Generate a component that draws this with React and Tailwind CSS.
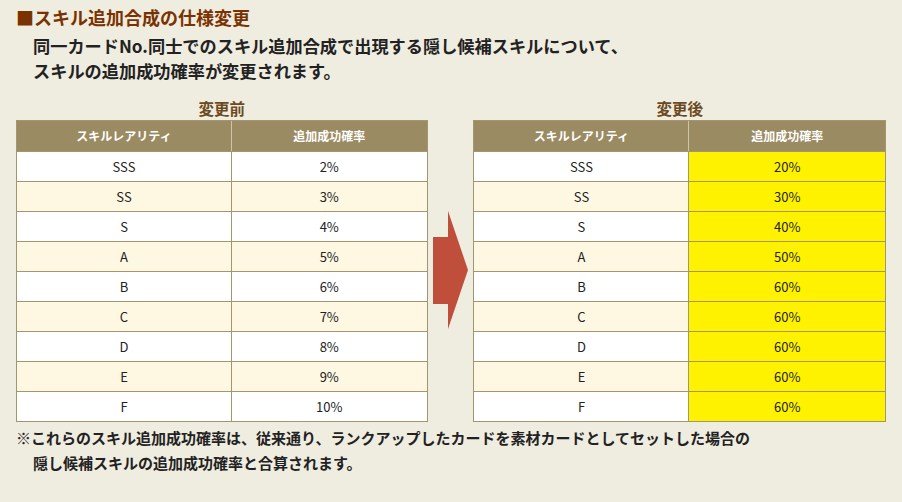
const rows = [
  ["SSS", "2%", "20%"],
  ["SS", "3%", "30%"],
  ["S", "4%", "40%"],
  ["A", "5%", "50%"],
  ["B", "6%", "60%"],
  ["C", "7%", "60%"],
  ["D", "8%", "60%"],
  ["E", "9%", "60%"],
  ["F", "10%", "60%"],
];

function RateTable({ title, index, leftW, highlight }) {
  return (
    <div className="flex flex-col">
      <div className="h-[22px] text-center text-[15.5px] leading-[20px] font-bold text-[#6b4a1e]">
        {title}
      </div>
      <div className="border border-[#a29670] bg-white">
        <div className="flex h-[30px] bg-[#9b8b62] text-white text-[12px] font-bold">
          <div
            className="flex items-center justify-center border-r border-[#cfc4a4]"
            style={{ width: leftW }}
          >
            スキルレアリティ
          </div>
          <div className="flex flex-1 items-center justify-center">追加成功確率</div>
        </div>
        {rows.map((r, i) => (
          <div
            key={r[0]}
            className={
              "flex h-[30px] border-t border-[#a29670] text-[13px] text-[#222] " +
              (i % 2 === 0 ? "bg-white" : "bg-[#fef8e3]")
            }
          >
            <div
              className="flex items-center justify-center border-r border-[#a29670]"
              style={{ width: leftW }}
            >
              {r[0]}
            </div>
            <div
              className={
                "flex flex-1 items-center justify-center " +
                (highlight ? "bg-[#fff200]" : "")
              }
            >
              {r[index]}
            </div>
          </div>
        ))}
      </div>
    </div>
  );
}

export default function App() {
  return (
    <div
      className="w-[902px] h-[502px] bg-[#efece0] px-4 pt-[7px] text-[#222]"
      style={{ fontFamily: '"Noto Sans CJK JP", "Noto Sans", sans-serif' }}
    >
      <h1 className="text-[18px] leading-[20px] font-bold text-[#7a3300]">
        ■スキル追加合成の仕様変更
      </h1>
      <p className="mt-[6px] pl-[17px] text-[17.2px] leading-[25px] font-bold">
        同一カードNo.同士でのスキル追加合成で出現する隠し候補スキルについて、
        <br />
        スキルの追加成功確率が変更されます。
      </p>

      <div className="mt-[15px] flex">
        <div className="w-[412px]">
          <RateTable title="変更前" index={1} leftW={215} />
        </div>
        <div className="flex w-[46px] items-center justify-center pt-[22px]">
          <svg width="36" height="120" viewBox="0 0 36 120">
            <polygon points="0,26 15,26 15,0 35,59 15,118 15,93 0,93" fill="#bf4f3a" />
          </svg>
        </div>
        <div className="w-[413px]">
          <RateTable title="変更後" index={2} leftW={215} highlight />
        </div>
      </div>

      <p className="mt-[3px] text-[15px] leading-[25px] font-bold">
        ※これらのスキル追加成功確率は、従来通り、ランクアップしたカードを素材カードとしてセットした場合の
        <br />
        <span className="pl-[17px]">隠し候補スキルの追加成功確率と合算されます。</span>
      </p>
    </div>
  );
}
